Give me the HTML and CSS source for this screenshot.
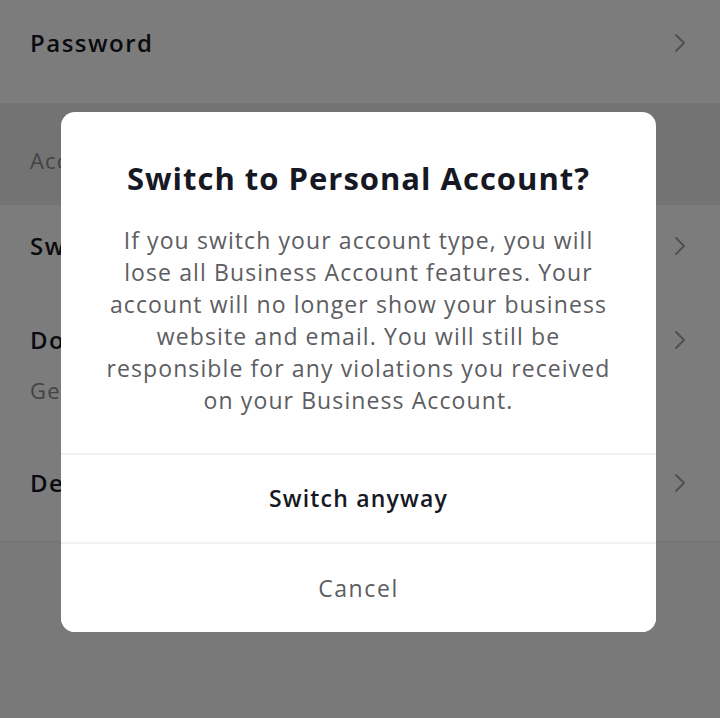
FILE: index.html
```html
<!DOCTYPE html>
<html lang="en">
<head>
<meta charset="utf-8">
<title>Switch to Personal Account?</title>
<link rel="stylesheet" href="styles.css">
</head>
<body>
<div class="screen">
  <div class="settings">
    <div class="row row-top">
      <span class="row-title">Password</span>
      <svg class="chev" width="14" height="24" viewBox="0 0 14 24"><path d="M3 4 L11 12 L3 20" fill="none" stroke="currentColor" stroke-width="2" stroke-linecap="round" stroke-linejoin="round"/></svg>
    </div>
    <div class="section">Account control</div>
    <div class="row row-mid">
      <span class="row-title">Switch to Personal Account</span>
      <svg class="chev" width="14" height="24" viewBox="0 0 14 24"><path d="M3 4 L11 12 L3 20" fill="none" stroke="currentColor" stroke-width="2" stroke-linecap="round" stroke-linejoin="round"/></svg>
    </div>
    <div class="row row-sub">
      <div class="row-text">
        <span class="row-title">Download your data</span>
        <span class="row-subtitle">Get a copy of your TikTok data</span>
      </div>
      <svg class="chev" width="14" height="24" viewBox="0 0 14 24"><path d="M3 4 L11 12 L3 20" fill="none" stroke="currentColor" stroke-width="2" stroke-linecap="round" stroke-linejoin="round"/></svg>
    </div>
    <div class="row row-last">
      <span class="row-title">Delete account</span>
      <svg class="chev" width="14" height="24" viewBox="0 0 14 24"><path d="M3 4 L11 12 L3 20" fill="none" stroke="currentColor" stroke-width="2" stroke-linecap="round" stroke-linejoin="round"/></svg>
    </div>
    <div class="filler"></div>
  </div>
  <div class="overlay"></div>
  <div class="dialog">
    <h1 class="dialog-title">Switch to Personal Account?</h1>
    <p class="dialog-body">If you switch your account type, you will<br>lose all Business Account features. Your<br>account will no longer show your business<br>website and email. You will still be<br>responsible for any violations you received<br>on your Business Account.</p>
    <button class="dialog-btn btn-primary">Switch anyway</button>
    <button class="dialog-btn btn-cancel">Cancel</button>
  </div>
</div>
</body>
</html>
```

FILE: styles.css
```css
* { box-sizing: border-box; }
html, body { margin: 0; padding: 0; }
body {
  width: 720px;
  height: 718px;
  overflow: hidden;
  font-family: "Open Sans", "Lato", sans-serif;
  background: #ffffff;
}
.screen {
  position: relative;
  width: 720px;
  height: 718px;
  overflow: hidden;
}
.settings {
  display: flex;
  flex-direction: column;
  height: 718px;
  background: #ffffff;
}
.row {
  display: flex;
  justify-content: space-between;
  align-items: flex-start;
  padding: 0 30px;
  color: #161823;
  background: #ffffff;
}
.row-title {
  font-size: 24px;
  font-weight: 600;
  line-height: 28px;
  letter-spacing: 1.5px;
  white-space: nowrap;
}
.chev { color: #a3a3a6; flex: none; margin-right: 3px; margin-top: 2px; }
.row-top { height: 103px; padding-top: 29px; }
.section {
  height: 102px;
  background: #ececec;
  color: #8a8b91;
  font-size: 22px;
  padding: 44px 30px 0;
  line-height: 26px;
  letter-spacing: 1.2px;
  white-space: nowrap;
}
.row-mid { height: 82px; padding-top: 27px; }
.row-sub { height: 143px; padding-top: 39px; }
.row-text { display: flex; flex-direction: column; gap: 23px; }
.row-subtitle { font-size: 22px; color: #8a8b91; line-height: 26px; letter-spacing: 1.2px; white-space: nowrap; }
.row-last { height: 113px; padding-top: 39px; border-bottom: 2px solid #f1f1f2; }
.filler { flex: 1; background: #f8f8f8; }
.overlay {
  position: absolute;
  inset: 0;
  background: rgba(0, 0, 0, 0.515);
}
.dialog {
  position: absolute;
  left: 61px;
  top: 112px;
  width: 595px;
  height: 520px;
  background: #ffffff;
  border-radius: 14px;
  display: flex;
  flex-direction: column;
  overflow: hidden;
}
.dialog-title {
  margin: 0;
  padding-top: 49px;
  font-size: 31px;
  font-weight: 700;
  line-height: 34px;
  letter-spacing: 1px;
  text-align: center;
  color: #161823;
  white-space: nowrap;
}
.dialog-body {
  margin: 29px 0 0;
  padding-bottom: 37px;
  font-size: 23px;
  line-height: 32px;
  letter-spacing: 1.1px;
  text-align: center;
  color: #5c5d62;
  border-bottom: 2px solid #f1f1f2;
  white-space: nowrap;
}
.dialog-btn {
  height: 89px;
  border: none;
  background: #ffffff;
  font-family: inherit;
  font-size: 23px;
  text-align: center;
  padding: 0;
}
.btn-primary { font-weight: 600; color: #161823; letter-spacing: 1.2px; border-bottom: 2px solid #f1f1f2; }
.btn-cancel { font-weight: 400; color: #5c5d62; letter-spacing: 1.6px; }
```
